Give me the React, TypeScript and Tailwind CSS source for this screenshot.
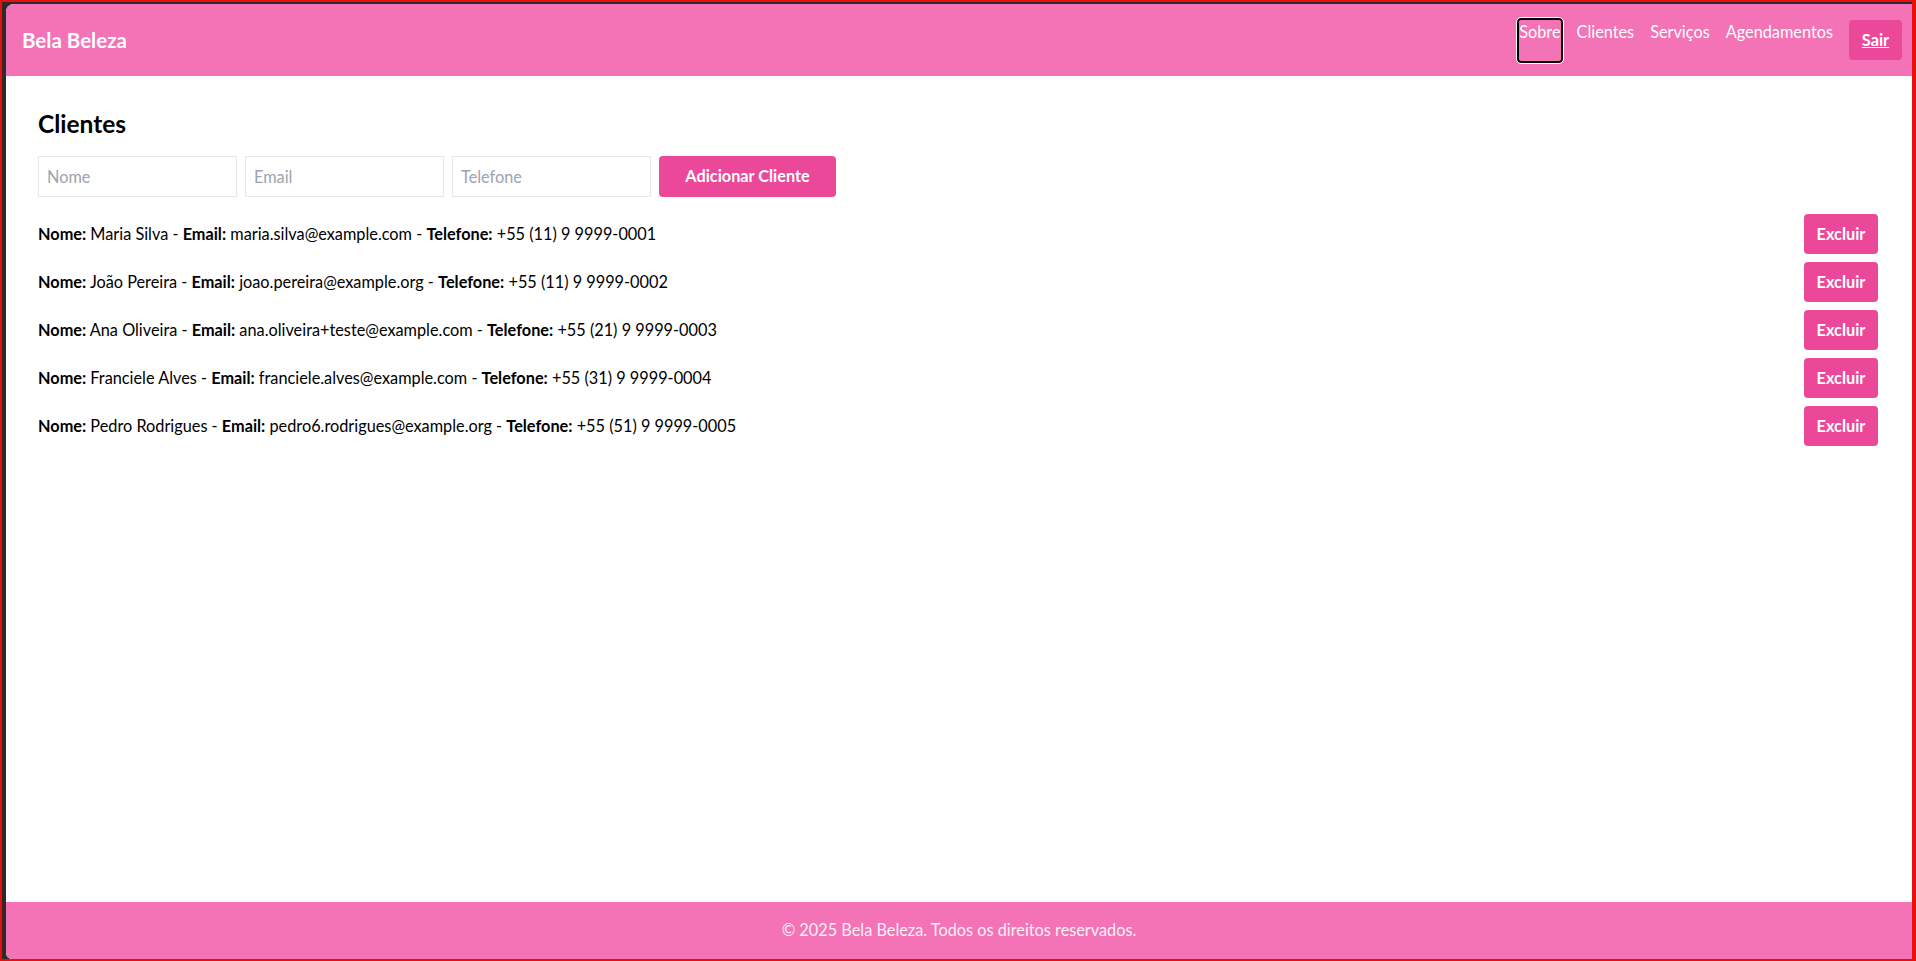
import React from "react";

const clients = [
  { nome: "Maria Silva", email: "maria.silva@example.com", tel: "+55 (11) 9 9999-0001" },
  { nome: "João Pereira", email: "joao.pereira@example.org", tel: "+55 (11) 9 9999-0002" },
  { nome: "Ana Oliveira", email: "ana.oliveira+teste@example.com", tel: "+55 (21) 9 9999-0003" },
  { nome: "Franciele Alves", email: "franciele.alves@example.com", tel: "+55 (31) 9 9999-0004" },
  { nome: "Pedro Rodrigues", email: "pedro6.rodrigues@example.org", tel: "+55 (51) 9 9999-0005" },
];

export default function App() {
  return (
    <div
      className="h-[961px] w-[1916px] bg-[#e8100f] pt-[2px] pl-[2px] pr-[4px] pb-[2px] overflow-hidden"
      style={{ fontFamily: "Lato, 'Noto Sans', sans-serif" }}
    >
      <div className="h-full w-full bg-[#2e2a2b] pl-[4px] pt-[2px]">
        <div className="h-full w-full bg-white flex flex-col rounded-tl-[8px] rounded-bl-[6px] overflow-hidden">
          <header className="h-[72px] shrink-0 bg-[#f472b6] flex items-center justify-between pl-4 pr-[10px]">
            <div className="text-white font-bold text-[20.5px]">Bela Beleza</div>
            <nav className="flex items-center gap-4 text-white text-[16.3px]">
              <a className="h-[45px] pt-0 leading-6 rounded-[4px] border-2 border-black outline outline-1 outline-white -mx-[2px] px-0">
                Sobre
              </a>
              <a className="h-[45px] pt-[2px] leading-6">Clientes</a>
              <a className="h-[45px] pt-[2px] leading-6">Serviços</a>
              <a className="h-[45px] pt-[2px] leading-6">Agendamentos</a>
              <button className="h-[40px] w-[53px] bg-[#ec4899] rounded-[4px] font-bold underline text-white">
                Sair
              </button>
            </nav>
          </header>

          <main className="flex-1 px-8 pt-8 pr-[34px]">
            <h1 className="text-[24.5px] leading-8 font-bold text-black mb-4">Clientes</h1>
            <div className="flex gap-2">
              <input
                placeholder="Nome"
                className="w-[199px] h-[41px] px-2 border border-[#e5e7eb] text-[16.3px] placeholder:text-[#9ca3af] outline-none"
              />
              <input
                placeholder="Email"
                className="w-[199px] h-[41px] px-2 border border-[#e5e7eb] text-[16.3px] placeholder:text-[#9ca3af] outline-none"
              />
              <input
                placeholder="Telefone"
                className="w-[199px] h-[41px] px-2 border border-[#e5e7eb] text-[16.3px] placeholder:text-[#9ca3af] outline-none"
              />
              <button className="h-[41px] w-[177px] bg-[#ec4899] text-white font-bold text-[16.3px] rounded-[4px]">
                Adicionar Cliente
              </button>
            </div>
            <ul className="mt-[17px] flex flex-col gap-2">
              {clients.map((c) => (
                <li key={c.email} className="flex items-center justify-between h-[40px] text-[16.3px] text-black">
                  <span>
                    <b>Nome:</b> {c.nome} - <b>Email:</b> {c.email} - <b>Telefone:</b> {c.tel}
                  </span>
                  <button className="h-[40px] w-[74px] bg-[#ec4899] text-white font-bold rounded-[4px]">Excluir</button>
                </li>
              ))}
            </ul>
          </main>

          <footer className="h-[57px] shrink-0 bg-[#f472b6] flex items-center justify-center text-[#fdf0f7] text-[16.3px]">
            © 2025 Bela Beleza. Todos os direitos reservados.
          </footer>
        </div>
      </div>
    </div>
  );
}
